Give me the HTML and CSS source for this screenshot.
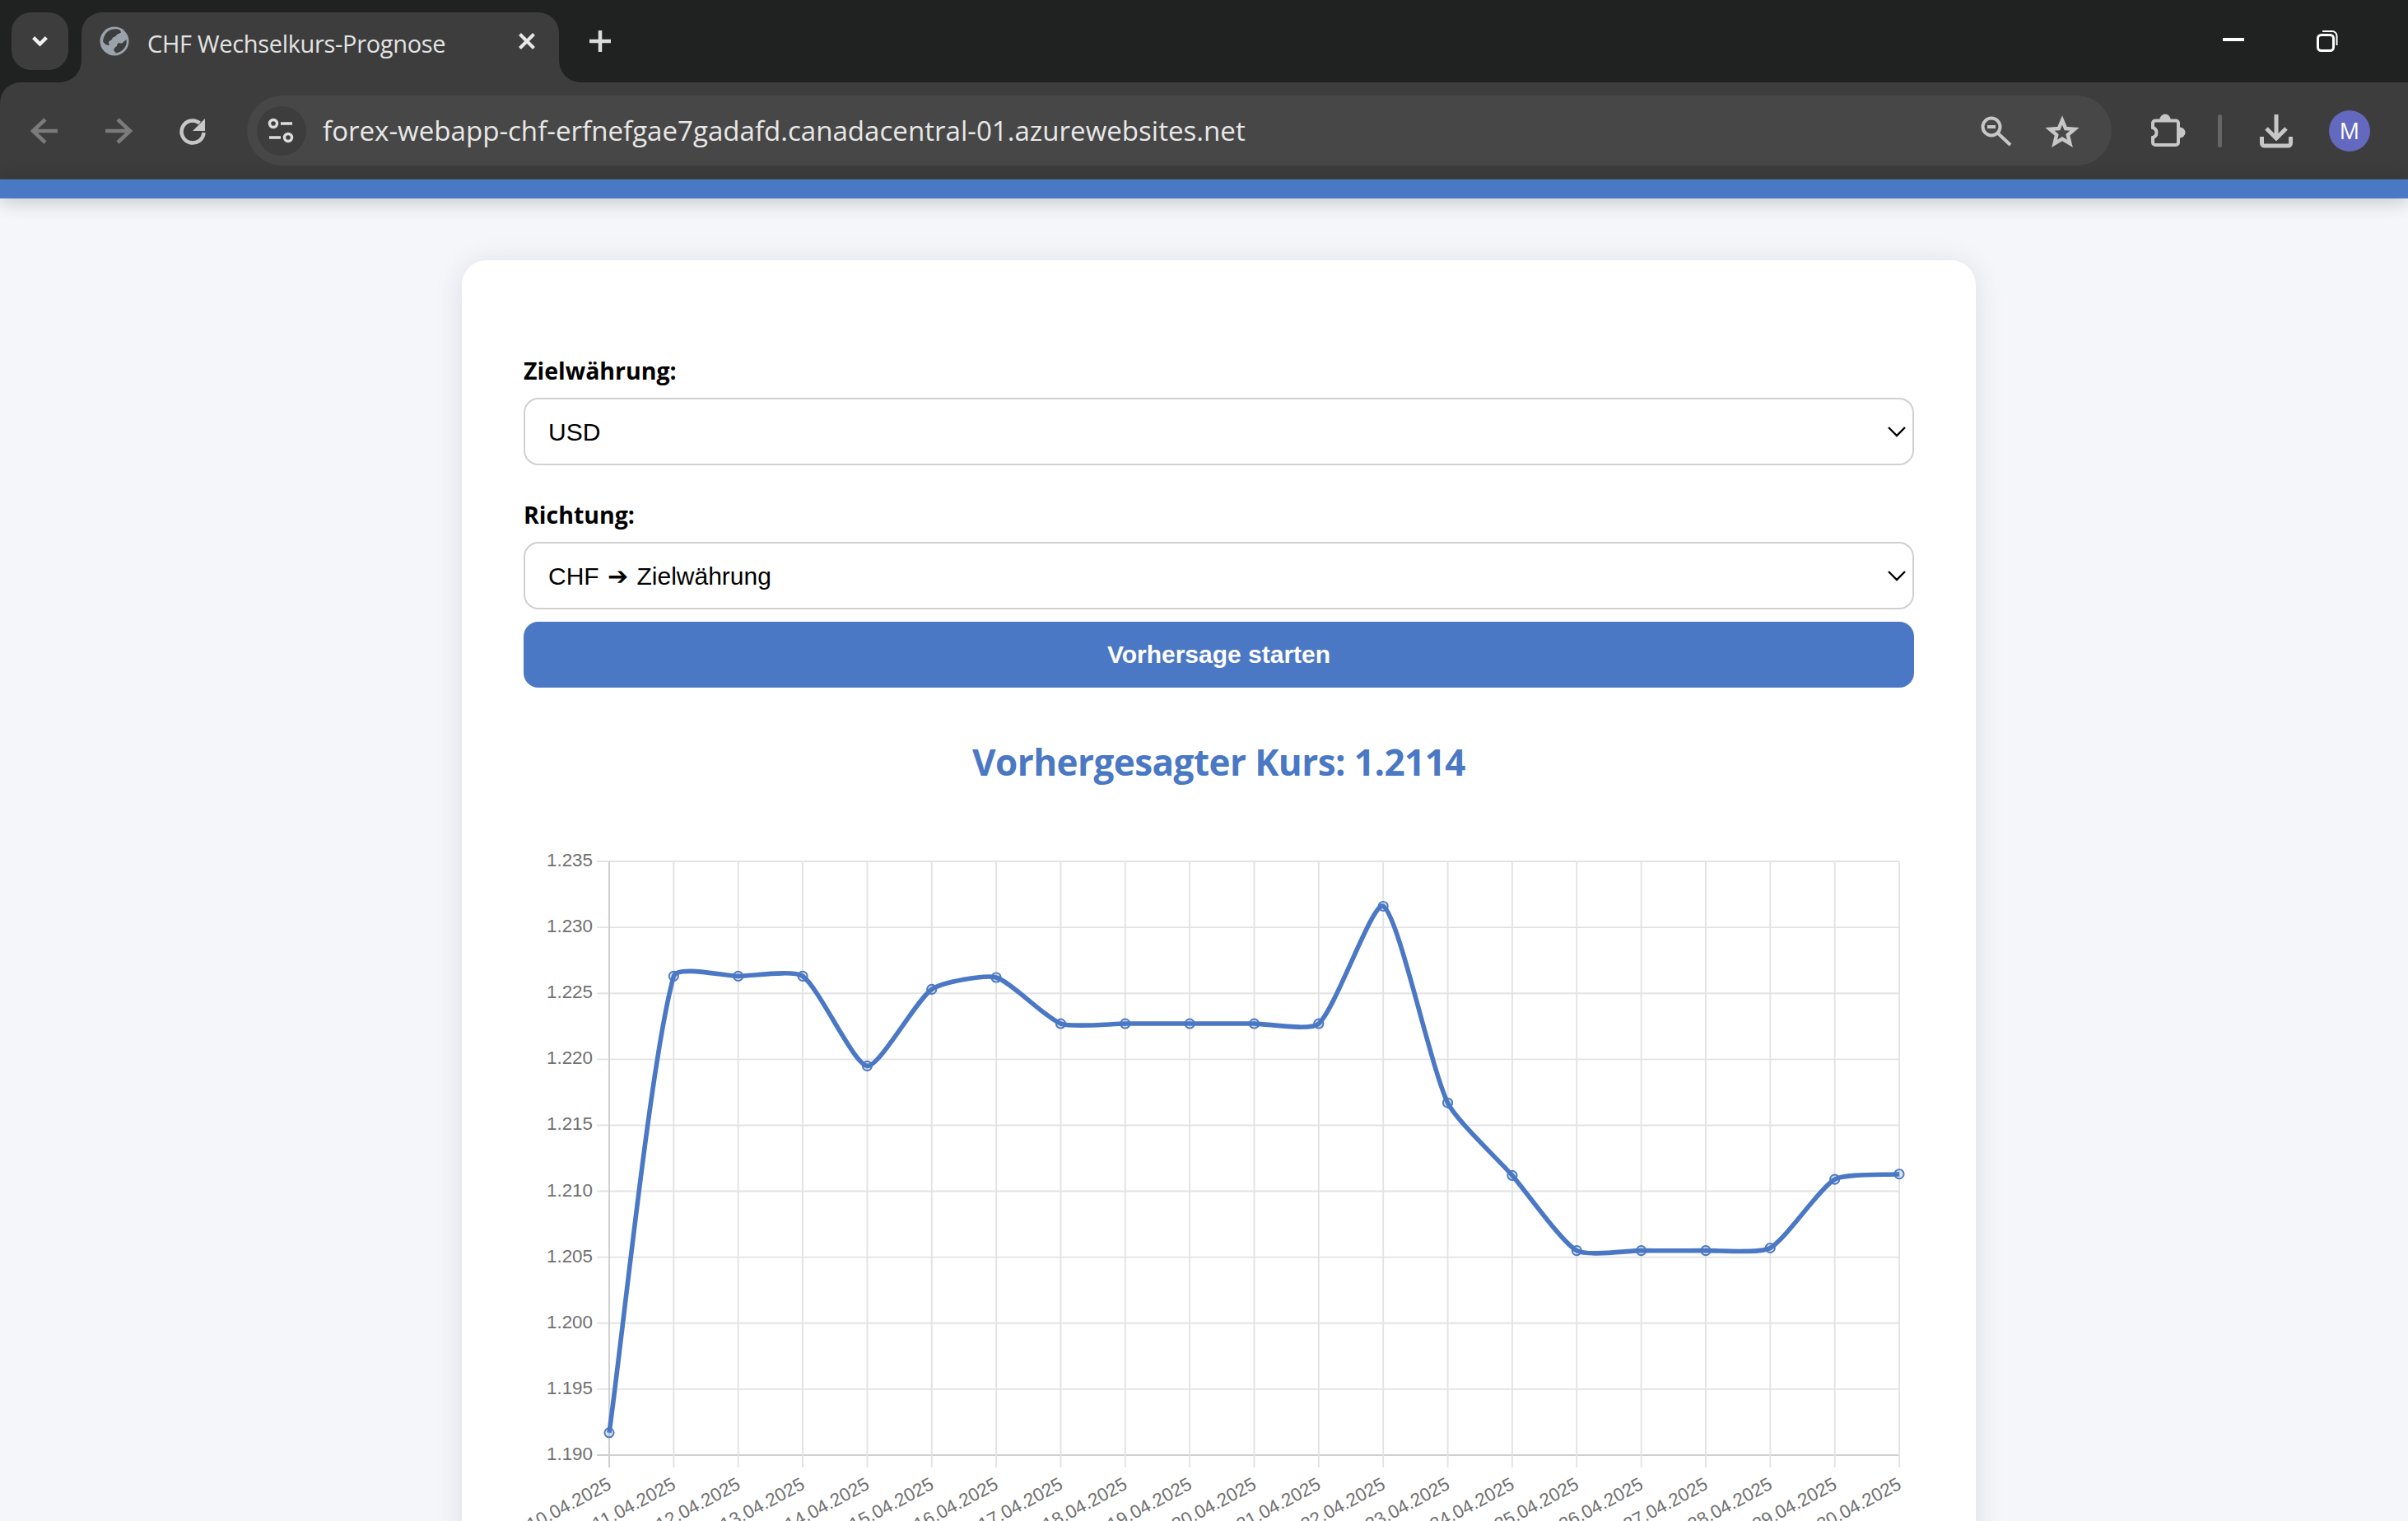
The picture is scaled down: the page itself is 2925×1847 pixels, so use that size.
FILE: index.html
```html
<!DOCTYPE html>
<html lang="de">
<head>
<meta charset="utf-8">
<title>CHF Wechselkurs-Prognose</title>
<link rel="stylesheet" href="styles.css">
</head>
<body>
<header class="browser">
  <div class="tabstrip">
    <button class="tab-search" type="button">
      <svg class="i20" viewBox="0 0 24 16"><path d="M3 3l9 9 9-9" fill="none" stroke="#f1f1f1" stroke-width="5"/></svg>
    </button>
    <div class="tab">
      <svg class="favicon" viewBox="0 0 36 36">
        <circle cx="18" cy="18" r="17.5" fill="#9aa3ab"/>
        <path d="M11 5.500C15 2.800 21 2.500 25 4.500L26 7.500l-5 2.500c-1 2-3 3-5 3.500-1 3-3 4-4.500 4.500-1 1.500-.5 3.500.5 5-3 .5-6-1.500-8-4.500C4.500 13 7 8 11 5.500z" fill="#3d3d3d"/>
        <path d="M32.500 16c.8 4-.3 8-2.500 10.500-2.500 3-6 5.500-10 6l-3-3.500c1-3 2-4 4-5 0-2.500 1-3.500 3.500-4 1 1 2 1 3 .3 1.500-1 3-2.800 5-4.300z" fill="#3d3d3d"/>
      </svg>
      <span class="tab-title">CHF Wechselkurs-Prognose</span>
      <svg class="tab-close" viewBox="0 0 20 20"><path d="M1.5 1.5l17 17M18.5 1.5l-17 17" stroke="#e8e8e8" stroke-width="4" fill="none"/></svg>
    </div>
    <svg class="new-tab" viewBox="0 0 26 26"><path d="M13 0v26M0 13h26" stroke="#dcdcdc" stroke-width="4.5" fill="none"/></svg>
    <div class="window-controls">
      <span class="win-min"></span>
      <svg class="win-restore" viewBox="0 0 26 27">
        <rect x="1.5" y="6.5" width="19" height="19" rx="4" fill="none" stroke="#fff" stroke-width="3"/>
        <path d="M7 2h12a5.500 5.500 0 0 1 5.500 5.500V19" fill="none" stroke="#fff" stroke-width="2"/>
      </svg>
    </div>
  </div>
  <div class="toolbar">
    <div class="nav-btn">
      <svg class="i36" viewBox="0 0 36 36"><path d="M34 18H6M19 4L4 18l15 14" fill="none" stroke="#7b7b7b" stroke-width="4.500"/></svg>
    </div>
    <div class="nav-btn">
      <svg class="i36" viewBox="0 0 36 36"><path d="M2 18h28M17 4l15 14-15 14" fill="none" stroke="#7b7b7b" stroke-width="4.500"/></svg>
    </div>
    <div class="nav-btn">
      <svg class="i36" viewBox="0 0 36 36">
        <path d="M26.500 8.500A13.500 13.500 0 1 0 31.500 20" fill="none" stroke="#c7c7c7" stroke-width="4.500"/>
        <path d="M33 3v15H18z" fill="#c7c7c7"/>
      </svg>
    </div>
    <div class="omnibox">
      <div class="site-info">
        <svg class="i36" viewBox="0 0 36 36">
          <circle cx="8" cy="9" r="4.500" fill="none" stroke="#dcdcdc" stroke-width="3.500"/>
          <path d="M17 9h14M3 26h14" stroke="#dcdcdc" stroke-width="3.500" fill="none"/>
          <circle cx="26" cy="26" r="4.500" fill="none" stroke="#dcdcdc" stroke-width="3.500"/>
        </svg>
      </div>
      <span class="url">forex-webapp-chf-erfnefgae7gadafd.canadacentral-01.azurewebsites.net</span>
      <svg class="i44 omni-zoom" viewBox="0 0 44 44">
        <circle cx="18" cy="17" r="10.500" fill="none" stroke="#c7c7c7" stroke-width="4"/>
        <path d="M26 25l15 14" stroke="#c7c7c7" stroke-width="4" fill="none"/>
        <path d="M13 17h10" stroke="#c7c7c7" stroke-width="4" fill="none"/>
      </svg>
      <svg class="i44 omni-star" viewBox="0 0 44 44">
        <path d="M22 9l4.200 10 10.800.8-8.200 7 2.600 10.500L22 31.600l-9.400 5.700 2.600-10.500-8.200-7 10.800-.8z" fill="none" stroke="#c7c7c7" stroke-width="4.500"/>
      </svg>
    </div>
    <div class="nav-btn ext-btn">
      <svg class="i44" viewBox="0 0 44 44">
        <circle cx="19" cy="8" r="6.500" fill="#c7c7c7"/>
        <circle cx="37" cy="24" r="6.500" fill="#c7c7c7"/>
        <path d="M7 9.500h25a3 3 0 0 1 3 3V36a3 3 0 0 1-3 3H7a3 3 0 0 1-3-3v-6c6-2 6-10 0-12v-5.500a3 3 0 0 1 3-3z" fill="#3d3d3d" stroke="#c7c7c7" stroke-width="4"/>
      </svg>
    </div>
    <span class="tool-sep"></span>
    <div class="nav-btn dl-btn">
      <svg class="i44" viewBox="0 0 44 44">
        <path d="M22 2v28M10 19l12 12 12-12" fill="none" stroke="#c7c7c7" stroke-width="5"/>
        <path d="M4.500 29v8a3 3 0 0 0 3 3h29a3 3 0 0 0 3-3v-8" fill="none" stroke="#c7c7c7" stroke-width="5"/>
      </svg>
    </div>
    <div class="avatar">M</div>
  </div>
</header>
<div class="accent-bar"></div>
<main class="page">
  <section class="card">
    <form class="form">
      <label class="field-label" for="target">Zielwährung:</label>
      <div class="select-wrap">
        <select class="select" id="target"><option>USD</option></select>
        <svg class="chevron" viewBox="0 0 22 13"><path d="M1 1l10 10L21 1" fill="none" stroke="#000" stroke-width="2.400"/></svg>
      </div>
      <label class="field-label second" for="direction">Richtung:</label>
      <div class="select-wrap">
        <select class="select" id="direction"><option>CHF ➔ Zielwährung</option></select>
        <svg class="chevron" viewBox="0 0 22 13"><path d="M1 1l10 10L21 1" fill="none" stroke="#000" stroke-width="2.400"/></svg>
      </div>
      <button class="submit" type="button">Vorhersage starten</button>
    </form>
    <h2 class="result">Vorhergesagter Kurs: 1.2114</h2>
    <svg class="chart" id="chart" viewBox="0 0 1689 860"></svg>
  </section>
</main>
<script src="chart.js"></script>
</body>
</html>
```
FILE: styles.css
```css
* { box-sizing: border-box; }
html, body { margin: 0; height: 100%; }
body {
  height: 1847px;
  overflow: hidden;
  background: #f4f6fa;
  font-family: "Liberation Sans", Arial, sans-serif;
}

/* browser chrome */
.browser { background: #202221; }
.tabstrip {
  position: relative;
  display: flex;
  align-items: flex-start;
  height: 100px;
  padding: 15px 85px 0 14px;
}
.tab-search {
  display: flex;
  align-items: center;
  justify-content: center;
  width: 69px;
  height: 70px;
  padding: 0;
  border: 0;
  border-radius: 24px;
  background: #3d3d3d;
}
.i20 { width: 21px; height: 14px; }
.i36 { width: 36px; height: 36px; display: block; }
.i44 { width: 44px; height: 44px; display: block; flex: none; }
.tab {
  position: relative;
  display: flex;
  align-items: center;
  width: 580px;
  height: 85px;
  margin-left: 16px;
  padding: 0 29px 15px 22px;
  border-radius: 25px 25px 0 0;
  background: #3d3d3d;
}
.tab::before, .tab::after {
  content: "";
  position: absolute;
  bottom: 0;
  width: 26px;
  height: 26px;
}
.tab::before {
  left: -26px;
  background: radial-gradient(circle at 0 0, transparent 25.500px, #3d3d3d 26px);
}
.tab::after {
  right: -26px;
  background: radial-gradient(circle at 100% 0, transparent 25.500px, #3d3d3d 26px);
}
.favicon { width: 36px; height: 36px; flex: none; }
.tab-title {
  margin-left: 22px;
  padding-top: 5px;
  font-family: "Open Sans", "Noto Sans", sans-serif;
  font-size: 29px;
  letter-spacing: -0.33px;
  white-space: nowrap;
  color: #e3e3e3;
}
.tab-close { width: 20px; height: 20px; margin-left: auto; flex: none; }
.new-tab { width: 26px; height: 26px; margin: 22px 0 0 37px; flex: none; }
.window-controls {
  display: flex;
  align-items: flex-start;
  margin-left: auto;
}
.win-min { width: 26px; height: 4px; margin-top: 31px; background: #fff; }
.win-restore { width: 26px; height: 27px; margin: 21px 0 0 88px; }

.toolbar {
  display: flex;
  align-items: center;
  height: 118px;
  padding-left: 9px;
  border-bottom: 1px solid #4b535e;
  border-top-left-radius: 25px;
  background: #3d3d3d;
}
.nav-btn {
  display: flex;
  align-items: center;
  justify-content: center;
  width: 90px;
  height: 84px;
  flex: none;
}
.omnibox {
  display: flex;
  align-items: center;
  width: 2265px;
  height: 85px;
  margin-left: 21px;
  padding: 0 38px 0 12px;
  border-radius: 43px;
  background: #474747;
  flex: none;
}
.site-info {
  display: flex;
  align-items: center;
  justify-content: center;
  width: 60px;
  height: 60px;
  border-radius: 50%;
  background: #3d3d3d;
  flex: none;
}
.url {
  margin-left: 20px;
  font-family: "Open Sans", "Noto Sans", sans-serif;
  font-size: 33.100px;
  white-space: nowrap;
  color: #e8e8e8;
}
.omni-zoom { margin-left: auto; }
.omni-star { margin-left: 38px; }
.ext-btn { margin-left: 23px; }
.tool-sep {
  width: 5px;
  height: 40px;
  margin-left: 16px;
  border-radius: 3px;
  background: #666;
  flex: none;
}
.dl-btn { margin-left: 21px; }
.avatar {
  display: flex;
  align-items: center;
  justify-content: center;
  width: 50px;
  height: 50px;
  margin-left: 19px;
  border-radius: 50%;
  background: #6469c0;
  font-family: "Open Sans", "Noto Sans", sans-serif;
  font-size: 27px;
  color: #fff;
  flex: none;
}
.accent-bar {
  position: relative;
  height: 23px;
  background: #4a78c4;
  box-shadow: 0 2px 24px rgba(0, 0, 0, 0.24);
}

/* page */
.page { height: 1606px; padding-top: 75px; overflow: hidden; }
.card {
  width: 1839px;
  height: 1600px;
  margin-left: 561px;
  padding: 112px 75px 0;
  border-radius: 30px;
  background: #fff;
  box-shadow: 0 4px 36px rgba(0, 10, 40, 0.1);
}
.form { display: block; }
.field-label {
  display: block;
  height: 44px;
  margin-bottom: 11px;
  font-family: "Open Sans", "Noto Sans", sans-serif;
  font-size: 28.500px;
  font-weight: 700;
  line-height: 44px;
  color: #000;
}
.field-label.second { margin-top: 38px; }
.select-wrap { position: relative; }
.select {
  display: block;
  width: 100%;
  height: 82px;
  padding: 0 28px;
  border: 2px solid #d0d0d0;
  border-radius: 18px;
  background: #fff;
  font-family: "Liberation Sans", "DejaVu Sans", Arial, sans-serif;
  font-size: 30px;
  word-spacing: 2px;
  color: #000;
  appearance: none;
}
.chevron {
  position: absolute;
  right: 10px;
  top: 35px;
  width: 22px;
  height: 13px;
}
.submit {
  display: block;
  width: 100%;
  height: 80px;
  margin-top: 15px;
  border: 0;
  border-radius: 18px;
  background: #4a78c4;
  font-family: "Liberation Sans", Arial, sans-serif;
  font-size: 30px;
  font-weight: 700;
  color: #fff;
}
.result {
  height: 60px;
  margin: 60px 0 0;
  font-family: "Open Sans", "Noto Sans", sans-serif;
  font-size: 44px;
  font-weight: 700;
  letter-spacing: -0.55px;
  line-height: 60px;
  text-align: center;
  color: #4a78c4;
}
.chart {
  display: block;
  width: 1689px;
  height: 860px;
  margin-top: 45px;
}
.grid { stroke: #e3e3e3; stroke-width: 1.900; }
.axis { stroke: #cfcfcf; stroke-width: 1.900; }
.tick-label {
  font-family: "Liberation Sans", Arial, sans-serif;
  font-size: 22.400px;
  fill: #707070;
}
.line { fill: none; stroke: #4a78c4; stroke-width: 5.600; }
.point { fill: rgba(74, 120, 196, 0.2); stroke: #4a78c4; stroke-width: 1.900; }
```
FILE: chart.js
```js
(function () {
  var NS = "http://www.w3.org/2000/svg";
  var svg = document.getElementById("chart");
  var values = [1.1917, 1.2263, 1.2263, 1.2263, 1.2195, 1.2253, 1.2262, 1.2227, 1.2227, 1.2227, 1.2227, 1.2227,
    1.2316, 1.2167, 1.2112, 1.2055, 1.2055, 1.2055, 1.2057, 1.2109, 1.2113];
  var left = 104, right = 1671, top = 46, bottom = 767;
  var stepX = (right - left) / 20, yMin = 1.19, yMax = 1.235;

  function el(name, attrs, text) {
    var n = document.createElementNS(NS, name);
    Object.keys(attrs).forEach(function (k) { n.setAttribute(k, attrs[k]); });
    if (text) n.textContent = text;
    svg.appendChild(n);
    return n;
  }
  function yOf(v) { return bottom - (v - yMin) / (yMax - yMin) * (bottom - top); }

  // horizontal grid and y labels
  for (var i = 0; i < 10; i++) {
    var y = top + i * (bottom - top) / 9;
    el("line", { x1: left - 15, x2: right, y1: y, y2: y, "class": i === 9 ? "axis" : "grid" });
    el("text", { x: left - 20, y: y + 6, "text-anchor": "end", "class": "tick-label" }, (1.235 - i * 0.005).toFixed(3));
  }
  // vertical grid and x labels
  for (var j = 0; j <= 20; j++) {
    var x = left + j * stepX;
    el("line", { x1: x, x2: x, y1: top, y2: bottom + 15, "class": j === 0 ? "axis" : "grid" });
    var d = String(10 + j) + ".04.2025";
    var lx = x + 4, ly = bottom + 40;
    el("text", { x: lx, y: ly, "text-anchor": "end", "class": "tick-label", transform: "rotate(-28 " + lx + " " + ly + ")" }, d);
  }

  // Bezier interpolation with tension 0.2
  var pts = values.map(function (v, k) { return { x: left + k * stepX, y: yOf(v) }; });
  var t = 0.2;
  pts.forEach(function (p, k) {
    var a = pts[Math.max(k - 1, 0)], b = pts[Math.min(k + 1, pts.length - 1)];
    var d01 = Math.hypot(p.x - a.x, p.y - a.y), d12 = Math.hypot(b.x - p.x, b.y - p.y);
    var sum = d01 + d12 || 1, fa = t * d01 / sum, fb = t * d12 / sum;
    p.c1x = p.x - fa * (b.x - a.x); p.c1y = p.y - fa * (b.y - a.y);
    p.c2x = p.x + fb * (b.x - a.x); p.c2y = p.y + fb * (b.y - a.y);
  });
  var path = "M" + pts[0].x + " " + pts[0].y;
  for (var m = 1; m < pts.length; m++) {
    path += "C" + pts[m - 1].c2x + " " + pts[m - 1].c2y + " " + pts[m].c1x + " " + pts[m].c1y + " " + pts[m].x + " " + pts[m].y;
  }
  el("path", { d: path, "class": "line" });
  pts.forEach(function (p) { el("circle", { cx: p.x, cy: p.y, r: 5.6, "class": "point" }); });
})();
```
